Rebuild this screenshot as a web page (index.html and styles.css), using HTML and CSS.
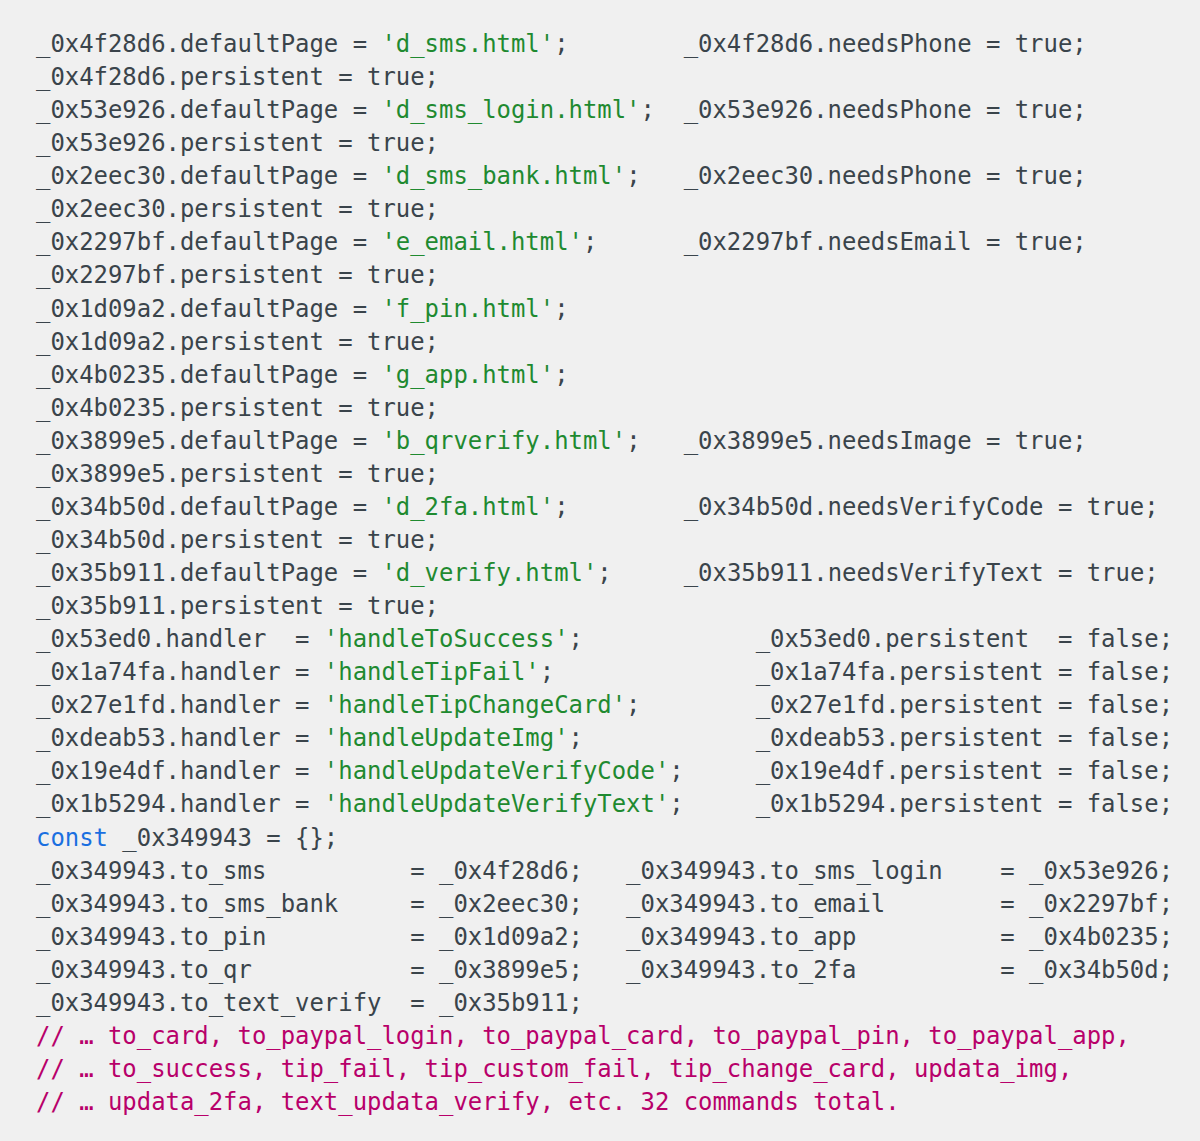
FILE: index.html
```html
<!DOCTYPE html>
<html lang="en">
<head>
<meta charset="utf-8">
<title>Code</title>
<link rel="stylesheet" href="styles.css">
</head>
<body>
<main class="page">
<pre class="code"><code>_0x4f28d6.defaultPage = <span class="str">'d_sms.html'</span>;        _0x4f28d6.needsPhone = true;
_0x4f28d6.persistent = true;
_0x53e926.defaultPage = <span class="str">'d_sms_login.html'</span>;  _0x53e926.needsPhone = true;
_0x53e926.persistent = true;
_0x2eec30.defaultPage = <span class="str">'d_sms_bank.html'</span>;   _0x2eec30.needsPhone = true;
_0x2eec30.persistent = true;
_0x2297bf.defaultPage = <span class="str">'e_email.html'</span>;      _0x2297bf.needsEmail = true;
_0x2297bf.persistent = true;
_0x1d09a2.defaultPage = <span class="str">'f_pin.html'</span>;
_0x1d09a2.persistent = true;
_0x4b0235.defaultPage = <span class="str">'g_app.html'</span>;
_0x4b0235.persistent = true;
_0x3899e5.defaultPage = <span class="str">'b_qrverify.html'</span>;   _0x3899e5.needsImage = true;
_0x3899e5.persistent = true;
_0x34b50d.defaultPage = <span class="str">'d_2fa.html'</span>;        _0x34b50d.needsVerifyCode = true;
_0x34b50d.persistent = true;
_0x35b911.defaultPage = <span class="str">'d_verify.html'</span>;     _0x35b911.needsVerifyText = true;
_0x35b911.persistent = true;
_0x53ed0.handler  = <span class="str">'handleToSuccess'</span>;            _0x53ed0.persistent  = false;
_0x1a74fa.handler = <span class="str">'handleTipFail'</span>;              _0x1a74fa.persistent = false;
_0x27e1fd.handler = <span class="str">'handleTipChangeCard'</span>;        _0x27e1fd.persistent = false;
_0xdeab53.handler = <span class="str">'handleUpdateImg'</span>;            _0xdeab53.persistent = false;
_0x19e4df.handler = <span class="str">'handleUpdateVerifyCode'</span>;     _0x19e4df.persistent = false;
_0x1b5294.handler = <span class="str">'handleUpdateVerifyText'</span>;     _0x1b5294.persistent = false;
<span class="kw">const</span> _0x349943 = {};
_0x349943.to_sms          = _0x4f28d6;   _0x349943.to_sms_login    = _0x53e926;
_0x349943.to_sms_bank     = _0x2eec30;   _0x349943.to_email        = _0x2297bf;
_0x349943.to_pin          = _0x1d09a2;   _0x349943.to_app          = _0x4b0235;
_0x349943.to_qr           = _0x3899e5;   _0x349943.to_2fa          = _0x34b50d;
_0x349943.to_text_verify  = _0x35b911;
<span class="cm">// … to_card, to_paypal_login, to_paypal_card, to_paypal_pin, to_paypal_app,</span>
<span class="cm">// … to_success, tip_fail, tip_custom_fail, tip_change_card, updata_img,</span>
<span class="cm">// … updata_2fa, text_updata_verify, etc. 32 commands total.</span></code></pre>
</main>
</body>
</html>
```

FILE: styles.css
```css
html, body {
  margin: 0;
  padding: 0;
  background: #f0f0f0;
}

.page {
  width: 1200px;
  height: 1141px;
  box-sizing: border-box;
  padding: 28px 0 0 36px;
  background: #f0f0f0;
}

.code {
  margin: 0;
  font-family: "DejaVu Sans Mono", "Liberation Mono", monospace;
  font-size: 23.92px;
  line-height: 33.06px;
  color: #3a444b;
  white-space: pre;
}

.str {
  color: #1f8a30;
}

.kw {
  color: #1a6fe0;
}

.cm {
  color: #b8006a;
}
```
